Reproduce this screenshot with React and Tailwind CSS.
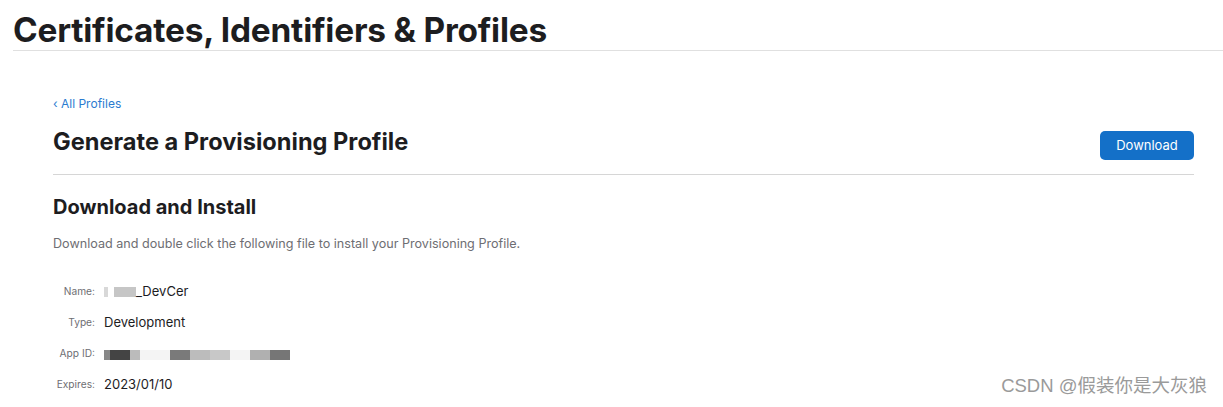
import React from 'react';

const font = { fontFamily: 'Inter, "Noto Sans", "Noto Sans CJK SC", sans-serif' };

function Row({ label, children }) {
  return (
    <div className="flex items-center h-[31px]">
      <div className="w-[42px] text-right text-[10.2px] text-[#6e6e73]">{label}</div>
      <div className="ml-[9px] text-[13px] text-[#1d1d1f] flex items-center">{children}</div>
    </div>
  );
}

function Blur({ cls }) {
  return <span className={`inline-block h-[10px] ${cls}`} />;
}

export default function App() {
  return (
    <div className="w-[1223px] h-[407px] bg-white relative overflow-hidden" style={font}>
      <div className="pl-[13px] pt-[11px]">
        <h1 className="text-[33.4px] leading-[39px] font-bold text-[#1d1d1f] tracking-[-0.2px]">
          Certificates, Identifiers &amp; Profiles
        </h1>
        <div className="border-b border-[#e0e0e0]" />
      </div>

      <div className="pl-[53px] pr-[29px]">
        <div className="mt-[45px] text-[12px] leading-[16px] text-[#2b7bd0]">‹ All Profiles</div>
        <div className="flex items-start justify-between mt-[15px] pb-[14px] border-b border-[#d6d6d6]">
          <h2 className="text-[23.6px] leading-[30px] font-bold text-[#1d1d1f]">Generate a Provisioning Profile</h2>
          <button className="mt-[4px] w-[94px] h-[29px] rounded-[5px] bg-[#1470c8] text-white text-[13px]">Download</button>
        </div>

        <h3 className="mt-[19px] text-[20px] leading-[26px] font-bold text-[#1d1d1f]">Download and Install</h3>
        <p className="mt-[15px] text-[12.6px] leading-[18px] text-[#6e6e73]">
          Download and double click the following file to install your Provisioning Profile.
        </p>

        <div className="mt-[23px]">
          <Row label="Name:">
            <span className="flex items-center">
              <Blur cls="w-[4px] bg-[#d8d8d8]" />
              <Blur cls="w-[6px] bg-white" />
              <Blur cls="w-[22px] bg-[#c6c6c6]" />
              <span>_DevCer</span>
            </span>
          </Row>
          <Row label="Type:">Development</Row>
          <Row label="App ID:">
            <span className="flex items-end h-[12px]">
              <Blur cls="w-[6px] h-[3px] bg-[#888]" />
              <Blur cls="w-[20px] bg-[#444]" />
              <Blur cls="w-[10px] h-[4px] bg-[#bbb]" />
              <Blur cls="w-[30px] bg-[#f4f4f4]" />
              <Blur cls="w-[20px] bg-[#7a7a7a]" />
              <Blur cls="w-[20px] bg-[#bcbcbc]" />
              <Blur cls="w-[20px] bg-[#c8c8c8]" />
              <Blur cls="w-[20px] bg-[#f4f4f4]" />
              <Blur cls="w-[20px] bg-[#b0b0b0]" />
              <Blur cls="w-[20px] bg-[#767676]" />
            </span>
          </Row>
          <Row label="Expires:">2023/01/10</Row>
        </div>
      </div>

      <div className="absolute right-[16px] bottom-[7px] text-[18.5px] text-[#9a9a9a]" style={{ fontFamily: '"Liberation Sans", "Noto Sans CJK SC", sans-serif' }}>
        CSDN @假装你是大灰狼
      </div>
    </div>
  );
}
